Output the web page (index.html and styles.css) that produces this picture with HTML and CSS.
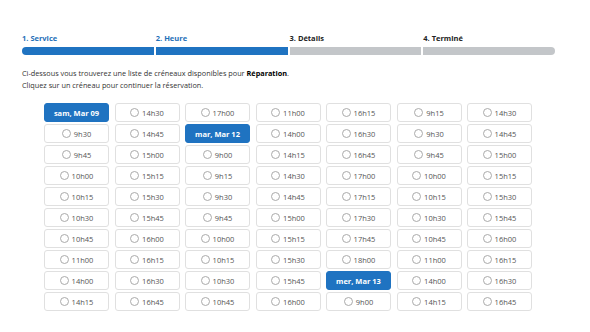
FILE: index.html
```html
<!DOCTYPE html>
<html lang="fr">
<head>
    <meta charset="UTF-8">
    <title>Réservation - Heure</title>
    <link rel="stylesheet" href="styles.css">
</head>
<body>
    <div class="booking">
        <!--étapes-->
        <ul class="steps">
            <li class="step done"><span>1. Service</span><i></i></li>
            <li class="step done"><span>2. Heure</span><i></i></li>
            <li class="step"><span>3. Détails</span><i></i></li>
            <li class="step"><span>4. Terminé</span><i></i></li>
        </ul>

        <p class="intro">
            Ci-dessous vous trouverez une liste de créneaux disponibles pour <b>Réparation</b>.<br>
            Cliquez sur un créneau pour continuer la réservation.
        </p>

        <!--créneaux-->
        <div class="slots" id="slots"></div>
    </div>

    <script>
        const slots = [
            "#sam, Mar 09", "9h30", "9h45", "10h00", "10h15", "10h30", "10h45", "11h00", "14h00", "14h15",
            "14h30", "14h45", "15h00", "15h15", "15h30", "15h45", "16h00", "16h15", "16h30", "16h45",
            "17h00", "#mar, Mar 12", "9h00", "9h15", "9h30", "9h45", "10h00", "10h15", "10h30", "10h45",
            "11h00", "14h00", "14h15", "14h30", "14h45", "15h00", "15h15", "15h30", "15h45", "16h00",
            "16h15", "16h30", "16h45", "17h00", "17h15", "17h30", "17h45", "18h00", "#mer, Mar 13", "9h00",
            "9h15", "9h30", "9h45", "10h00", "10h15", "10h30", "10h45", "11h00", "14h00", "14h15",
            "14h30", "14h45", "15h00", "15h15", "15h30", "15h45", "16h00", "16h15", "16h30", "16h45"
        ];
        const oSlots = document.getElementById("slots");
        slots.forEach((s) => {
            const el = document.createElement("div");
            if (s[0] === "#") {
                el.className = "slot day";
                el.textContent = s.slice(1);
            } else {
                el.className = "slot";
                el.innerHTML = '<span class="radio"></span>' + s;
            }
            oSlots.appendChild(el);
        });
    </script>
</body>
</html>
```

FILE: styles.css
```css
* {
    margin: 0;
    padding: 0;
    box-sizing: border-box;
}

ul {
    list-style: none;
}

body {
    font-family: "Open Sans", "Noto Sans", sans-serif;
    font-size: 7.3px;
    color: #333;
    background: #fff;
}

.booking {
    width: 533px;
    margin: 33px 0 0 22px;
}

.steps {
    display: flex;
    gap: 2px;
}

.step {
    flex: 1;
    display: flex;
    flex-direction: column;
    gap: 4px;
}

.step span {
    font-weight: 700;
    font-size: 7.5px;
    line-height: 10px;
    color: #222;
}

.step i {
    display: block;
    height: 8px;
    background-color: #c3c6c9;
}

.step.done span {
    color: #1f6fb8;
}

.step.done i {
    background-color: #1f73c1;
}

.step:first-child i {
    border-radius: 4px 0 0 4px;
}

.step:last-child i {
    border-radius: 0 4px 4px 0;
}

.intro {
    margin-top: 13px;
    line-height: 11.7px;
    color: #333;
}

.intro b {
    color: #000;
}

.slots {
    display: grid;
    grid-template-rows: repeat(10, 19px);
    grid-template-columns: repeat(7, 65px);
    grid-auto-flow: column;
    gap: 2px 5.5px;
    margin: 12px 0 0 22px;
}

.slot {
    display: flex;
    align-items: center;
    justify-content: center;
    gap: 3px;
    border: 1px solid #e0e0e0;
    border-radius: 3px;
    color: #555;
    font-size: 7.5px;
}

.slot .radio {
    width: 9px;
    height: 9px;
    border: 1px solid #aaa;
    border-radius: 50%;
}

.slot.day {
    background-color: #1f73c1;
    border-color: #1f73c1;
    color: #fff;
    font-weight: 700;
}
```
